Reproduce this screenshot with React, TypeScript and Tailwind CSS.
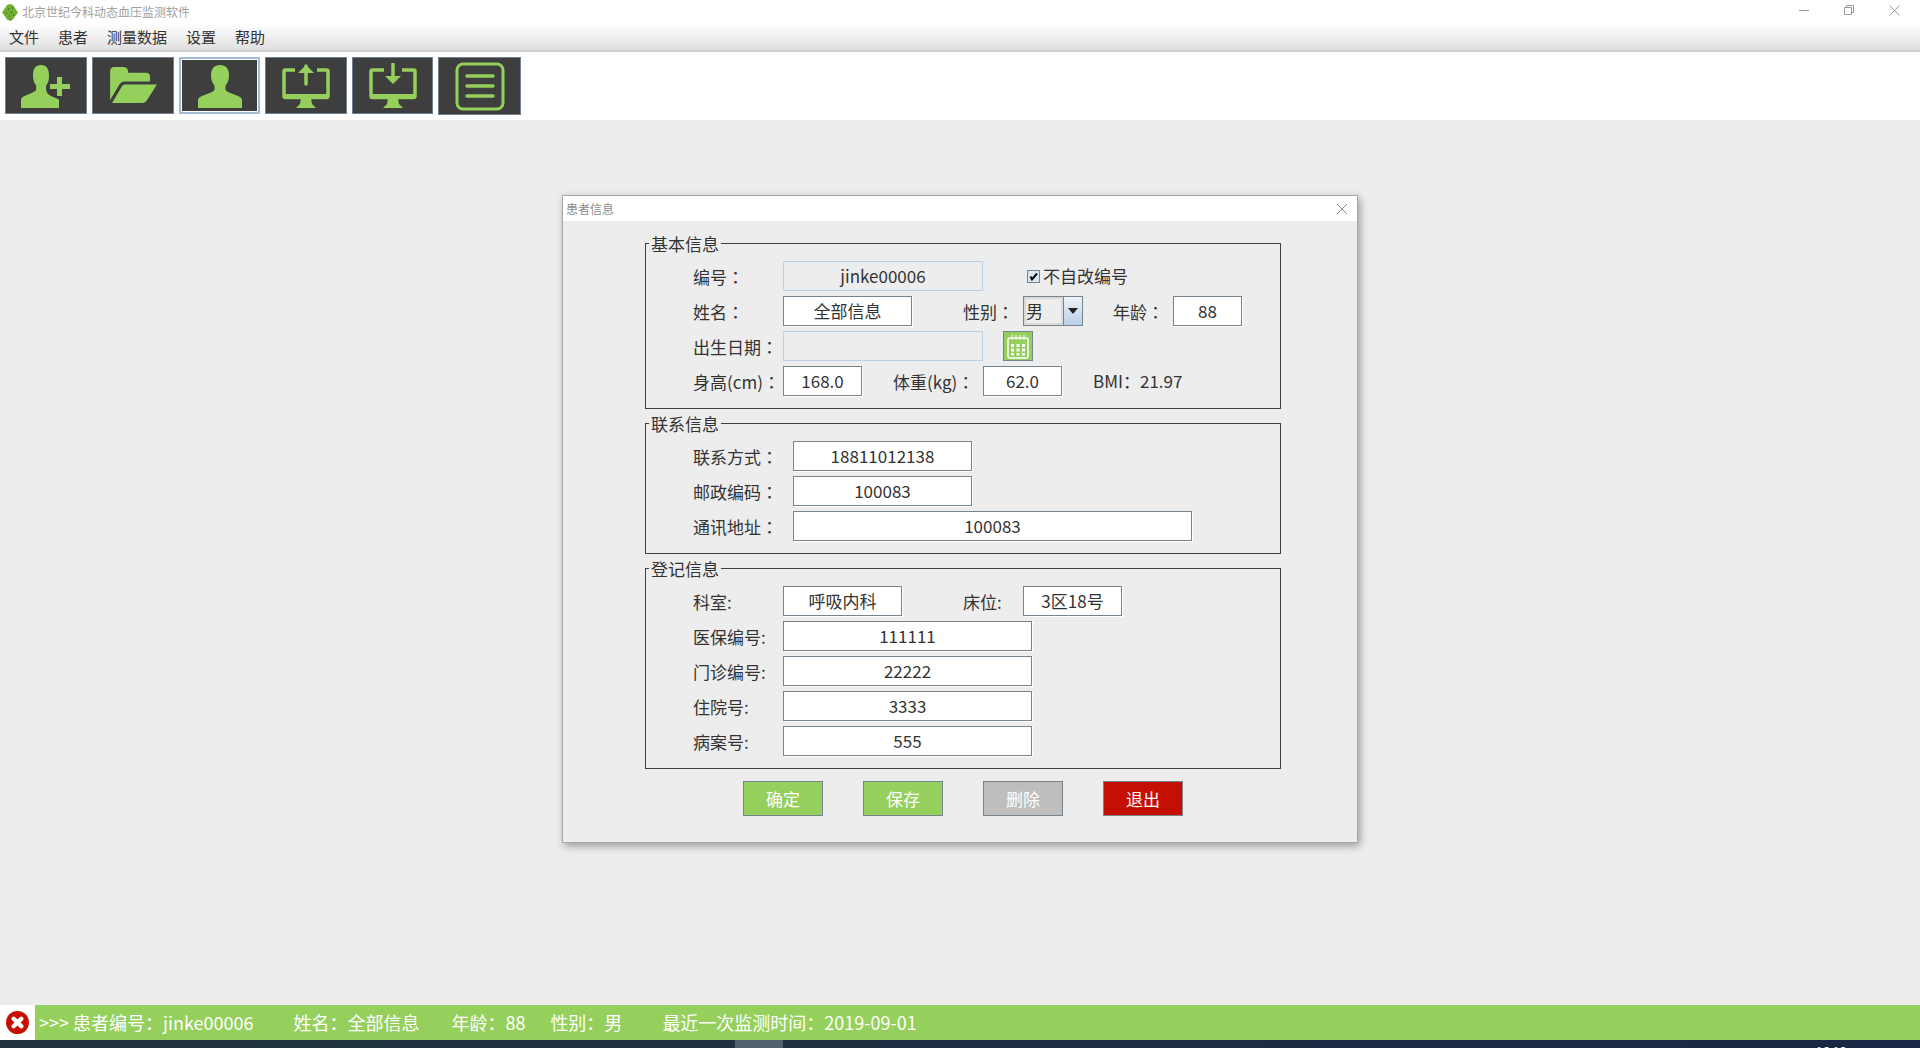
import React from "react";

const GREEN = "#94d05b";

const PersonShape = () => (
    <path d="M22 0c-6 0-9 4-9 10 0 3 .5 5.500 1.500 7.500.5 1.300 1.200 2.200 2 3v3.500c0 1.500-1 2.300-3 3.200L4 31c-2 .8-4 2-4 4.500V43h44v-7.500c0-2.500-2-3.700-4-4.500l-9.500-3.800c-2-.9-3-1.700-3-3.200v-3.500c.8-.8 1.500-1.700 2-3 1-2 1.500-4.500 1.500-7.500 0-6-3-10-9-10z" />
);

const ToolButton = ({
    width,
    selected,
    tall,
    children,
}: {
    width: string;
    selected?: boolean;
    tall?: boolean;
    children: React.ReactNode;
}) => (
    <div
        className={`${width} ${tall ? "h-[58px]" : "h-[57px]"} ${
            selected
                ? "border-2 border-[#a3bbd5] outline outline-1 -outline-offset-3 outline-white"
                : "border border-[#71808f]"
        } bg-[#3e3e3e] flex items-center justify-center shrink-0`}
    >
        {children}
    </div>
);

const Toolbar = () => (
    <div className="h-[68px] bg-white flex items-start pt-[5px] pl-[5px] gap-[5px]">
        <ToolButton width="w-[82px]">
            <svg width="49" height="43" viewBox="0 0 49 43" fill={GREEN} className="mt-[1px] -ml-[1px]">
                <path d="M20 0c-5.500 0-8 4-8 10 0 3 .5 5.500 1.300 7.500.5 1.300 1.100 2.200 1.900 3v3.500c0 1.500-1 2.300-3 3.200L3.500 31C1.500 31.800 0 33 0 35.500V43h38v-8.500l-8-3.500c-3-1.500-5-3.500-5-7v-3.500c.8-.8 1.400-1.700 1.900-3 .8-2 1.100-4.500 1.100-7.500 0-6-2.500-10-8-10z" />
                <path d="M36 12h5v7h8v5h-8v7h-5v-7h-7v-5h7z" />
            </svg>
        </ToolButton>
        <ToolButton width="w-[82px]">
            <svg width="47" height="37" viewBox="0 0 48 38" fill={GREEN}>
                <path d="M0 34V4c0-2 1.500-4 4-4h9c3 0 5 1 5.500 4.500V6H37c3 0 4 2 4 4v5H15c-2.500 0-4 1-5.500 3z" />
                <path d="M2 37l10-17c1-1.600 2.500-2 4-2h32l-10 16c-1.200 2-3 3-5 3z" />
            </svg>
        </ToolButton>
        <ToolButton width="w-[81px]" selected>
            <svg width="44" height="43" viewBox="0 0 44 43" fill={GREEN} className="mt-[1px]">
                <PersonShape />
            </svg>
        </ToolButton>
        <ToolButton width="w-[82px]">
            <svg width="48" height="46" viewBox="0 0 48 46" fill="none" className="mt-[1px]">
                <path d="M13 7H3.500A1.500 1.500 0 0 0 2 8.500V33a1.500 1.500 0 0 0 1.500 1.500h41A1.500 1.500 0 0 0 46 33V8.500A1.500 1.500 0 0 0 44.500 7H35" stroke={GREEN} strokeWidth="3.500" />
                <path d="M2 31h44v4H2zM19 35h10l1 6 4 4H14l4-4z" fill={GREEN} />
                <path d="M24 3v18" stroke={GREEN} strokeWidth="3.500" strokeLinecap="round" />
                <path d="M16 10l8-8 8 8z" fill={GREEN} />
            </svg>
        </ToolButton>
        <ToolButton width="w-[81px]">
            <svg width="48" height="46" viewBox="0 0 48 46" fill="none" className="mt-[1px]">
                <path d="M15 7H3.500A1.500 1.500 0 0 0 2 8.500V33a1.500 1.500 0 0 0 1.500 1.500h41A1.500 1.500 0 0 0 46 33V8.500A1.500 1.500 0 0 0 44.500 7H33" stroke={GREEN} strokeWidth="3.500" />
                <path d="M2 31h44v4H2zM19 35h10l1 6 4 4H14l4-4z" fill={GREEN} />
                <path d="M24 1v16" stroke={GREEN} strokeWidth="3.500" strokeLinecap="round" />
                <path d="M16 13l8 8 8-8z" fill={GREEN} />
            </svg>
        </ToolButton>
        <ToolButton width="w-[83px]" tall>
            <svg width="50" height="49" viewBox="0 0 50 49" fill="none" stroke={GREEN}>
                <rect x="2" y="2" width="46" height="45" rx="6" strokeWidth="3" />
                <path d="M12 14h26M12 24h26M12 34h26" strokeWidth="3.500" strokeLinecap="round" />
            </svg>
        </ToolButton>
    </div>
);

// the colons in the form sit centred in their cell, which is the TC glyph
const Colon = () => <span className="font-['Noto_Sans_CJK_TC']">：</span>;

const Label = ({ width, children }: { width: string; children: React.ReactNode }) => (
    <span className={`${width} shrink-0 pt-px text-[17px] whitespace-nowrap text-[#333]`}>{children}</span>
);

const Field = ({
    width,
    value,
    disabled,
}: {
    width: string;
    value?: string;
    disabled?: boolean;
}) => (
    <div
        className={`${width} h-[30px] shrink-0 flex items-center justify-center text-[17px] text-[#333] ${
            disabled
                ? "border border-[#b9d0e6] bg-[#ededed]"
                : "border border-[#76848f] bg-white shadow-[1px_1px_0_#fff]"
        }`}
    >
        {value}
    </div>
);

const Row = ({ children }: { children: React.ReactNode }) => (
    <div className="flex items-center h-[30px] pl-[47px]">{children}</div>
);

const Group = ({ title, children }: { title: string; children: React.ReactNode }) => (
    <div className="relative border border-[#404040] pt-[17px] pb-[12px] flex flex-col gap-[5px]">
        <span className="absolute -top-[11px] left-[3px] bg-[#ededed] px-[2px] text-[17px] leading-[22px] text-[#333]">
            {title}
        </span>
        {children}
    </div>
);

const ActionBtn = ({ text, color }: { text: string; color: string }) => (
    <div
        className={`w-[80px] h-[35px] border border-[#76848f] ${color} flex items-center justify-center text-[17px] text-white`}
    >
        {text}
    </div>
);

const PatientDialog = () => (
    <div className="w-[796px] h-[648px] border border-[#a6a6a6] bg-[#ededed] shadow-[2px_3px_8px_rgba(0,0,0,0.35)]">
        <div className="h-[25px] bg-white flex items-center justify-between pl-[3px] pr-[9px]">
            <span className="text-[12px] text-[#8d8d8d]">患者信息</span>
            <svg width="12" height="12" viewBox="0 0 12 12" stroke="#8d8d8d" fill="none">
                <path d="M1 1l10 10M11 1L1 11" />
            </svg>
        </div>
        <div className="pl-[82px] pr-[76px] pt-[22px] flex flex-col gap-[14px]">
            <Group title="基本信息">
                <Row>
                    <Label width="w-[90px]">编号<Colon /></Label>
                    <Field width="w-[200px]" value="jinke00006" disabled />
                    <div className="flex items-center ml-[44px] gap-[2px] text-[17px] text-[#333]">
                        <span className="w-[13px] h-[13px] border border-[#76848f] bg-[#dbe6f1] flex items-center justify-center">
                            <svg width="9" height="9" viewBox="0 0 9 9" fill="none" stroke="#111" strokeWidth="2">
                                <path d="M1.500 4.500l1.500 3L8 1.500" />
                            </svg>
                        </span>
                        <span className="ml-[1px]">不自改编号</span>
                    </div>
                </Row>
                <Row>
                    <Label width="w-[90px]">姓名<Colon /></Label>
                    <Field width="w-[129px]" value="全部信息" />
                    <span className="w-[51px] shrink-0" />
                    <Label width="w-[60px]">性别<Colon /></Label>
                    <div className="w-[60px] h-[30px] flex border border-[#76848f] bg-[#ededed] shrink-0">
                        <span className="flex-1 border-2 border-[#d9d9d9] text-[17px] leading-[24px] text-[#333]">男</span>
                        <span className="w-[19px] border-l border-[#76848f] bg-gradient-to-b from-[#eef3f8] to-[#b8cfe6] flex items-center justify-center">
                            <svg width="10" height="6" viewBox="0 0 10 6" fill="#222">
                                <path d="M0 0h10L5 6z" />
                            </svg>
                        </span>
                    </div>
                    <span className="w-[30px] shrink-0" />
                    <Label width="w-[60px]">年龄<Colon /></Label>
                    <Field width="w-[69px]" value="88" />
                </Row>
                <Row>
                    <Label width="w-[90px]">出生日期<Colon /></Label>
                    <Field width="w-[200px]" disabled />
                    <div className="ml-[20px] w-[30px] h-[30px] border border-[#76848f] bg-[#94d05b] flex items-center justify-center">
                        <svg width="22" height="25" viewBox="0 0 22 25" fill="none">
                            <rect x="1" y="4" width="20" height="20" rx="2" stroke="#fff" strokeWidth="1.500" />
                            <path d="M5 1v5M9 1v5M13 1v5M17 1v5" stroke="#fff" />
                            <path d="M4 10h3v3H4zM9.500 10h3v3h-3zM15 10h3v3h-3zM4 14.500h3v3H4zM9.500 14.500h3v3h-3zM15 14.500h3v3h-3zM4 19h3v2.500H4zM9.500 19h3v2.500h-3zM15 19h3v2.500h-3z" fill="#fff" />
                        </svg>
                    </div>
                </Row>
                <Row>
                    <Label width="w-[90px]">身高(cm)<Colon /></Label>
                    <Field width="w-[79px]" value="168.0" />
                    <span className="w-[31px] shrink-0" />
                    <Label width="w-[90px]">体重(kg)<Colon /></Label>
                    <Field width="w-[79px]" value="62.0" />
                    <span className="ml-[31px] text-[17px] text-[#333]">BMI：21.97</span>
                </Row>
            </Group>
            <Group title="联系信息">
                <Row>
                    <Label width="w-[100px]">联系方式<Colon /></Label>
                    <Field width="w-[179px]" value="18811012138" />
                </Row>
                <Row>
                    <Label width="w-[100px]">邮政编码<Colon /></Label>
                    <Field width="w-[179px]" value="100083" />
                </Row>
                <Row>
                    <Label width="w-[100px]">通讯地址<Colon /></Label>
                    <Field width="w-[399px]" value="100083" />
                </Row>
            </Group>
            <Group title="登记信息">
                <Row>
                    <Label width="w-[90px]">科室:</Label>
                    <Field width="w-[119px]" value="呼吸内科" />
                    <span className="w-[61px] shrink-0" />
                    <Label width="w-[60px]">床位:</Label>
                    <Field width="w-[99px]" value="3区18号" />
                </Row>
                <Row>
                    <Label width="w-[90px]">医保编号:</Label>
                    <Field width="w-[249px]" value="111111" />
                </Row>
                <Row>
                    <Label width="w-[90px]">门诊编号:</Label>
                    <Field width="w-[249px]" value="22222" />
                </Row>
                <Row>
                    <Label width="w-[90px]">住院号:</Label>
                    <Field width="w-[249px]" value="3333" />
                </Row>
                <Row>
                    <Label width="w-[90px]">病案号:</Label>
                    <Field width="w-[249px]" value="555" />
                </Row>
            </Group>
        </div>
        <div className="flex justify-center gap-[40px] mt-[12px] pl-[6px]">
            <ActionBtn text="确定" color="bg-[#94d05b]" />
            <ActionBtn text="保存" color="bg-[#94d05b]" />
            <ActionBtn text="删除" color="bg-[#bebebe]" />
            <ActionBtn text="退出" color="bg-[#c40f02]" />
        </div>
    </div>
);

const App = () => {
    return (
        <div
            className="w-[1920px] h-[1048px] overflow-hidden flex flex-col bg-[#ededed]"
            style={{ fontFamily: '"Noto Sans CJK SC", "Noto Sans", sans-serif' }}
        >
            <div className="h-[24px] bg-white flex items-center justify-between shrink-0">
                <div className="flex items-center pl-[2px]">
                    <svg width="16" height="17" viewBox="0 0 16 17">
                        <path d="M8 0l3 1 2 3 3 4.500-3 4-2 3-3 1.500-3-1.500-2-3-3-4 3-4.500 2-3z" fill="#72b136" />
                        <path d="M6 5h1M10 4h1M4 9h1M9 8h1M11 11h1M7 12h1M8 15h1" stroke="#1f3a10" strokeWidth="1" />
                    </svg>
                    <span className="ml-[4px] text-[12px] text-[#a0a0a0]">北京世纪今科动态血压监测软件</span>
                </div>
                <div className="flex items-center pr-[20px] pb-[4px] gap-[35px]">
                    <svg width="10" height="10" viewBox="0 0 10 10" stroke="#9a9a9a" fill="none">
                        <path d="M0 5.500h10" />
                    </svg>
                    <svg width="10" height="10" viewBox="0 0 10 10" stroke="#9a9a9a" fill="none">
                        <path d="M.5 2.500h7v7h-7zM2.500 2.500v-2h7v7h-2" />
                    </svg>
                    <svg width="11" height="11" viewBox="0 0 11 11" stroke="#9a9a9a" fill="none">
                        <path d="M.5.500l10 10M10.500.500l-10 10" />
                    </svg>
                </div>
            </div>
            <div className="h-[26px] shrink-0 bg-gradient-to-b from-white to-[#dfdfdf] flex items-center pl-[9px] gap-[19px] text-[15px] text-[#333]">
                <span>文件</span>
                <span>患者</span>
                <span>测量数据</span>
                <span>设置</span>
                <span>帮助</span>
            </div>
            <div className="h-[2px] shrink-0 bg-[#cdcdcd]" />
            <Toolbar />
            <div className="flex-1 flex justify-center pt-[75px]">
                <PatientDialog />
            </div>
            <div className="h-[35px] shrink-0 bg-[#94d05b] flex items-center text-[18px] text-white whitespace-nowrap">
                <div className="w-[35px] h-[35px] bg-white flex items-center justify-center">
                    <svg width="23" height="23" viewBox="0 0 24 24">
                        <circle cx="12" cy="12" r="12" fill="#c40f02" />
                        <path d="M8 8l8 8M16 8l-8 8" stroke="#fff" strokeWidth="4.500" strokeLinecap="round" />
                    </svg>
                </div>
                <span className="ml-[4px]">&gt;&gt;&gt; 患者编号：jinke00006</span>
                <span className="ml-[40px]">姓名：全部信息</span>
                <span className="ml-[32px]">年龄：88</span>
                <span className="ml-[25px]">性别：男</span>
                <span className="ml-[40px]">最近一次监测时间：2019-09-01</span>
            </div>
            <div className="h-[8px] shrink-0 bg-gradient-to-r from-[#22353f] to-[#1a2745] flex overflow-hidden relative">
                <div className="ml-[735px] w-[48px] bg-[#50606c]" />
                <span className="absolute left-[1816px] top-[5px] text-[12px] leading-none text-white">16:16</span>
            </div>
        </div>
    );
};

export default App;
